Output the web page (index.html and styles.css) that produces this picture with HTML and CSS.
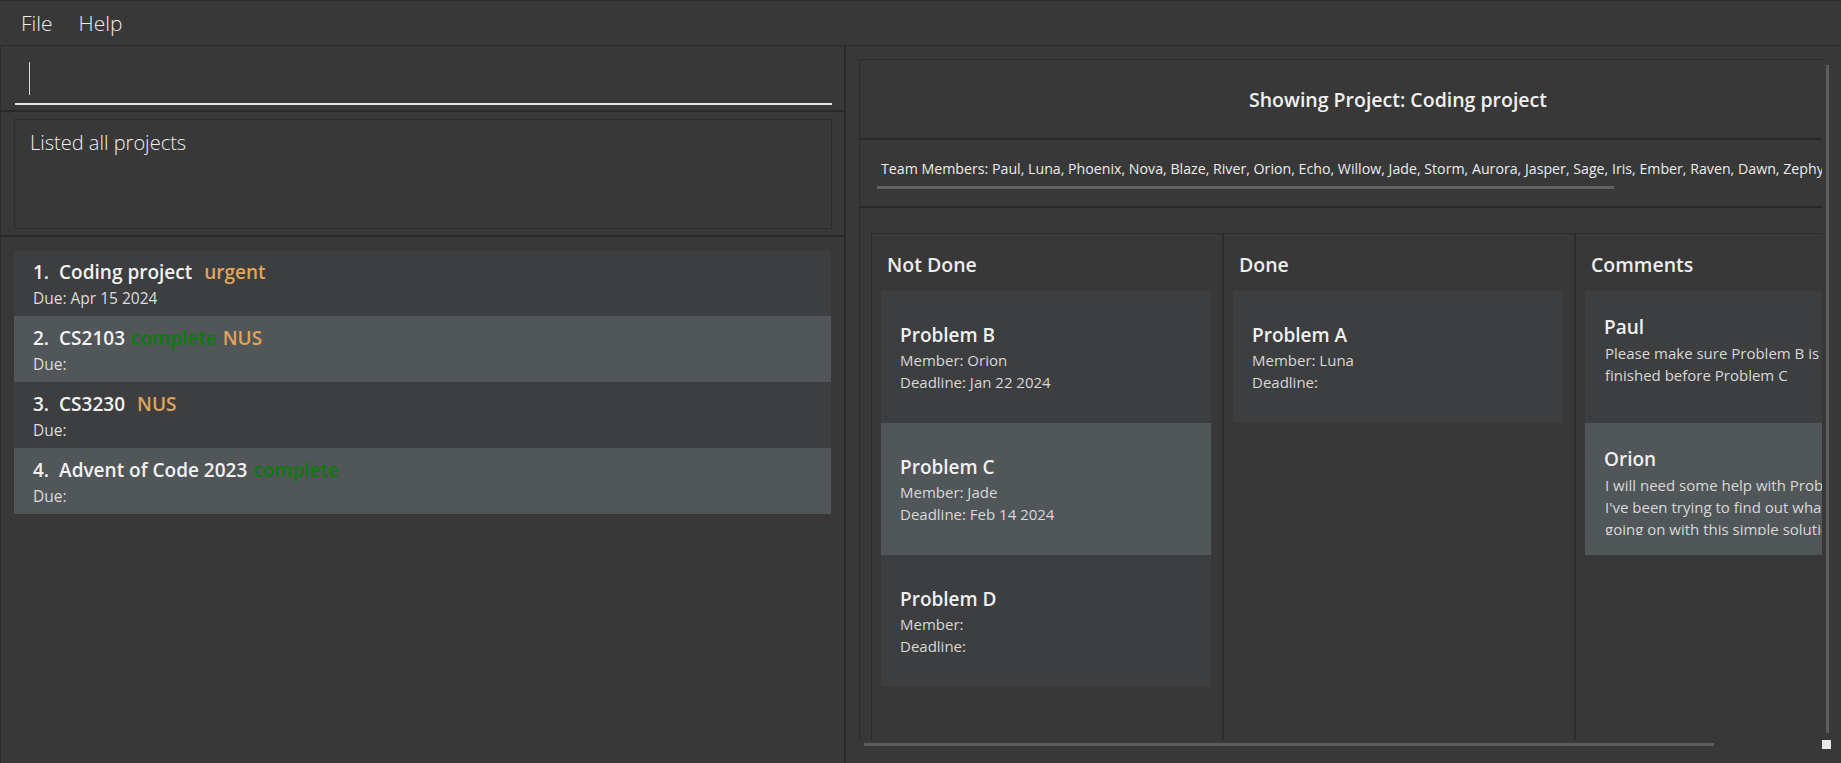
FILE: index.html
```html
<!DOCTYPE html>
<html lang="en">
<head>
<meta charset="utf-8">
<title>Project Manager</title>
<link rel="stylesheet" href="styles.css">
</head>
<body>
<div class="app">
  <nav class="menubar">
    <span class="menu-item">File</span>
    <span class="menu-item">Help</span>
  </nav>
  <div class="main">
    <section class="left">
      <div class="pane cmd-pane">
        <div class="cmd-field"><span class="caret"></span></div>
      </div>
      <div class="pane result-pane">
        <div class="result-box">Listed all projects</div>
      </div>
      <div class="pane list-pane">
        <ul class="project-list">
          <li class="project-card even">
            <div class="project-title"><span class="idx">1.</span><span class="name">Coding project</span><span class="status"></span><span class="tag">urgent</span></div>
            <div class="due">Due: Apr 15 2024</div>
          </li>
          <li class="project-card odd">
            <div class="project-title"><span class="idx">2.</span><span class="name">CS2103</span><span class="status">complete</span><span class="tag">NUS</span></div>
            <div class="due">Due:</div>
          </li>
          <li class="project-card even">
            <div class="project-title"><span class="idx">3.</span><span class="name">CS3230</span><span class="status"></span><span class="tag">NUS</span></div>
            <div class="due">Due:</div>
          </li>
          <li class="project-card odd">
            <div class="project-title"><span class="idx">4.</span><span class="name">Advent of Code 2023</span><span class="status">complete</span></div>
            <div class="due">Due:</div>
          </li>
        </ul>
      </div>
    </section>
    <section class="right">
      <div class="viewport">
        <div class="project-view">
          <header class="proj-header">Showing Project: Coding project</header>
          <div class="team">
            <div class="team-text">Team Members: Paul, Luna, Phoenix, Nova, Blaze, River, Orion, Echo, Willow, Jade, Storm, Aurora, Jasper, Sage, Iris, Ember, Raven, Dawn, Zephyr, Skye, Ash</div>
            <div class="team-hbar"></div>
          </div>
          <div class="board-wrap">
            <div class="board">
              <div class="column">
                <h2 class="col-title">Not Done</h2>
                <div class="task-card even">
                  <div class="task-title">Problem B</div>
                  <div class="task-line">Member: Orion</div>
                  <div class="task-line">Deadline: Jan 22 2024</div>
                </div>
                <div class="task-card odd">
                  <div class="task-title">Problem C</div>
                  <div class="task-line">Member: Jade</div>
                  <div class="task-line">Deadline: Feb 14 2024</div>
                </div>
                <div class="task-card even">
                  <div class="task-title">Problem D</div>
                  <div class="task-line">Member:</div>
                  <div class="task-line">Deadline:</div>
                </div>
              </div>
              <div class="column">
                <h2 class="col-title">Done</h2>
                <div class="task-card even">
                  <div class="task-title">Problem A</div>
                  <div class="task-line">Member: Luna</div>
                  <div class="task-line">Deadline:</div>
                </div>
              </div>
              <div class="column">
                <h2 class="col-title">Comments</h2>
                <div class="comment-card even">
                  <div class="comment-author">Paul</div>
                  <div class="comment-text">Please make sure Problem B is finished before Problem C</div>
                </div>
                <div class="comment-card odd">
                  <div class="comment-author">Orion</div>
                  <div class="comment-text">I will need some help with Problem C. I've been trying to find out what is going on with this simple solution for hours.</div>
                </div>
              </div>
            </div>
          </div>
        </div>
      </div>
      <div class="vbar"></div>
      <div class="hbar"></div>
      <div class="corner"></div>
    </section>
  </div>
</div>
</body>
</html>
```

FILE: styles.css
```css
* { box-sizing: border-box; }

html, body {
  margin: 0;
  padding: 0;
  height: 100%;
}

body {
  background: #383838;
  font-family: "Open Sans", "Noto Sans", sans-serif;
  color: #e8e8e8;
  overflow: hidden;
}

.app {
  width: 1841px;
  height: 763px;
  display: flex;
  flex-direction: column;
}

/* ---------- menu bar ---------- */
.menubar {
  height: 46px;
  flex: none;
  display: flex;
  align-items: center;
  padding-left: 8px;
  border-top: 1px solid #2c2c2c;
  border-bottom: 1px solid #2a2a2a;
  background: #383838;
}

.menu-item {
  padding: 0 13px;
  font-size: 21px;
  font-weight: 300;
  line-height: 44px;
  color: #ececec;
}

/* ---------- main split ---------- */
.main {
  flex: 1;
  display: flex;
  min-height: 0;
}

.left {
  width: 846px;
  flex: none;
  display: flex;
  flex-direction: column;
  border-left: 1px solid #2c2c2c;
  border-right: 2px solid #2a2a2a;
}

.pane {
  border-bottom: 2px solid #2a2a2a;
}

.cmd-pane {
  height: 66px;
  padding: 16px 12px 0 14px;
}

.cmd-field {
  height: 43px;
  border-bottom: 2px solid #e4e4e4;
  padding-left: 14px;
}

.caret {
  display: block;
  width: 1px;
  height: 33px;
  background: #d8d8d8;
}

.result-pane {
  height: 125px;
  padding: 7px 12px 0 13px;
}

.result-box {
  height: 110px;
  border: 1px solid #2c2c2c;
  padding: 9px 15px;
  font-size: 20px;
  font-weight: 300;
  line-height: 28px;
  color: #f0f0f0;
}

.list-pane {
  flex: 1;
  border-bottom: none;
  padding: 13px 13px 0 13px;
}

.project-list {
  list-style: none;
  margin: 0;
  padding: 0;
}

.project-card {
  height: 66px;
  padding: 8px 0 7px 19px;
}

.project-card.even { background: #3c3e3f; }
.project-card.odd { background: #515658; }

.project-title {
  display: flex;
  gap: 6px;
  font-size: 19px;
  font-weight: 600;
  line-height: 29px;
  color: #f2f2f2;
  white-space: nowrap;
}

.idx { margin-right: 4px; }

.status { color: #0b7c0b; }
.tag { color: #e0a45c; }

.due {
  font-size: 15.5px;
  line-height: 22px;
  color: #dcdcdc;
}

/* ---------- right side ---------- */
.right {
  flex: 1;
  position: relative;
  min-width: 0;
}

.viewport {
  width: 976px;
  height: 694px;
  overflow: hidden;
  padding: 13px 0 0 13px;
}

.project-view {
  width: 1078px;
  min-height: 760px;
  border: 1px solid #2c2c2c;
  display: flex;
  flex-direction: column;
}

.proj-header {
  height: 80px;
  flex: none;
  display: flex;
  align-items: center;
  justify-content: center;
  padding-top: 2px;
  font-size: 19.5px;
  font-weight: 600;
  line-height: 26px;
  color: #f0f0f0;
  border-bottom: 2px solid #282828;
}

.team {
  height: 68px;
  flex: none;
  padding-top: 19px;
  border-bottom: 2px solid #282828;
  overflow: hidden;
}

.team-text {
  padding-left: 21px;
  font-size: 14.2px;
  line-height: 20px;
  white-space: nowrap;
  color: #ececec;
}

.team-hbar {
  margin: 7px 0 0 17px;
  width: 737px;
  height: 3px;
  background: #626262;
}

.board-wrap {
  flex: 1;
  padding: 25px 0 0 11px;
}

.board {
  display: flex;
  height: 600px;
  border-top: 1px solid #2c2c2c;
  border-left: 1px solid #2c2c2c;
}

.column {
  width: 352px;
  border-right: 2px solid #2c2c2c;
  display: flex;
  flex-direction: column;
  padding-left: 9px;
}

.col-title {
  margin: 0 0 13px;
  padding: 18px 0 0 6px;
  font-size: 19.5px;
  font-weight: 600;
  line-height: 26px;
  color: #ededed;
}

.task-card,
.comment-card {
  width: 330px;
  height: 132px;
  flex: none;
  padding-left: 19px;
}

.task-card {
  display: flex;
  flex-direction: column;
  justify-content: center;
}

.even { background: #3c3e3f; }
.odd { background: #515658; }

.task-title,
.comment-author {
  font-size: 19px;
  font-weight: 600;
  line-height: 27px;
  color: #f0f0f0;
}

.task-line {
  font-size: 15px;
  line-height: 22px;
  color: #d8d8d8;
}

.comment-card {
  padding-top: 22px;
}

.comment-author {
  line-height: 29px;
}

.comment-text {
  width: 266px;
  max-height: 61px;
  overflow: hidden;
  padding-left: 1px;
  font-size: 15px;
  line-height: 22px;
  color: #d8d8d8;
}

/* scroll bars of the project view */
.vbar {
  position: absolute;
  left: 980px;
  top: 19px;
  width: 3px;
  height: 668px;
  background: #5c5c5c;
}

.hbar {
  position: absolute;
  left: 18px;
  top: 697px;
  width: 850px;
  height: 3px;
  background: #5c5c5c;
}

.corner {
  position: absolute;
  left: 976px;
  top: 694px;
  width: 9px;
  height: 9px;
  background: #e8e8e8;
}
```
